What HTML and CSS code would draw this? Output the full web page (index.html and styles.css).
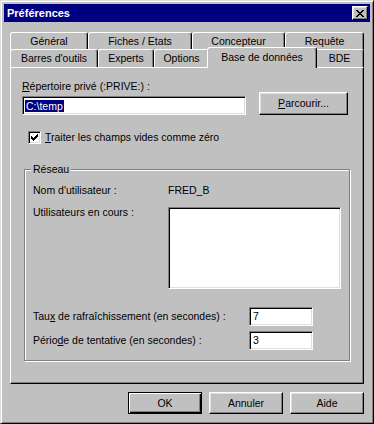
FILE: index.html
```html
<!DOCTYPE html>
<html lang="fr">
<head>
<meta charset="utf-8">
<title>Préférences</title>
<link rel="stylesheet" href="styles.css">
</head>
<body>
<div class="window">
  <div class="titlebar">
    <span class="title">Préférences</span>
    <span class="close">
      <svg width="8" height="7" viewBox="0 0 8 7" shape-rendering="crispEdges">
        <path fill="#000" d="M0 0h2v1H0zM6 0h2v1H6zM1 1h2v1H1zM5 1h2v1H5zM2 2h4v1H2zM3 3h2v1H3zM2 4h4v1H2zM1 5h2v1H1zM5 5h2v1H5zM0 6h2v1H0zM6 6h2v1H6z"/>
      </svg>
    </span>
  </div>
  <div class="content">
    <div class="tabs">
      <div class="tabrow row1">
        <div class="tab t-gen">Général</div>
        <div class="tab t-fic">Fiches / Etats</div>
        <div class="tab t-con">Concepteur</div>
        <div class="tab t-req">Requête</div>
      </div>
      <div class="tabrow row2">
        <div class="tab t-bar">Barres d'outils</div>
        <div class="tab t-exp">Experts</div>
        <div class="tab t-opt">Options</div>
        <div class="tab t-base sel">Base de données</div>
        <div class="tab t-bde">BDE</div>
      </div>
    </div>
    <div class="panel">
      <div class="label-top"><u>R</u>épertoire privé (:PRIVE:) :</div>
      <div class="fieldrow">
        <div class="field path"><span class="selected">C:\temp</span></div>
        <div class="btn browse"><u>P</u>arcourir...</div>
      </div>
      <div class="checkrow">
        <span class="checkbox">
          <svg width="7" height="7" viewBox="0 0 7 7" shape-rendering="crispEdges">
            <path fill="#000" d="M6 0h1v1H6zM5 1h2v1H5zM0 2h1v1H0zM4 2h3v1H4zM0 3h2v1H0zM3 3h3v1H3zM0 4h5v1H0zM1 5h3v1H1zM2 6h1v1H2z"/>
          </svg>
        </span>
        <span class="checklabel"><u>T</u>raiter les champs vides comme zéro</span>
      </div>
      <div class="group">
        <div class="legend">Réseau</div>
        <div class="grow name-row">
          <span class="glabel">Nom d'utilisateur :</span>
          <span class="gvalue">FRED_B</span>
        </div>
        <div class="grow users-row">
          <span class="glabel users-label">Utilisateurs en cours :</span>
          <div class="field listbox"></div>
        </div>
        <div class="grow num-row first">
          <span class="glabel wide">Tau<u>x</u> de rafraîchissement (en secondes) :</span>
          <div class="field num">7</div>
        </div>
        <div class="grow num-row second">
          <span class="glabel wide">Pério<u>d</u>e de tentative (en secondes) :</span>
          <div class="field num">3</div>
        </div>
      </div>
    </div>
    <div class="buttons">
      <div class="btn dlg default">OK</div>
      <div class="btn dlg">Annuler</div>
      <div class="btn dlg">Aide</div>
    </div>
  </div>
</div>
</body>
</html>
```
FILE: styles.css
```css
* { box-sizing: border-box; }
html, body { margin: 0; padding: 0; background: #c0c0c0; }
body {
  font-family: "Liberation Sans", Arial, sans-serif;
  font-size: 10.5px;
  line-height: 13px;
  color: #000;
}
u { text-decoration: underline; text-underline-offset: 1px; }

.window {
  width: 374px;
  height: 424px;
  border: 1px solid;
  border-color: #dfdfdf #000 #000 #dfdfdf;
  box-shadow: inset 1px 1px #fff, inset -1px -1px #808080;
  padding: 3px;
  background: #c0c0c0;
  display: flex;
  flex-direction: column;
}

.titlebar {
  height: 18px;
  background: #000080;
  display: flex;
  align-items: center;
  justify-content: space-between;
  padding: 0 2px 0 3px;
}
.title { color: #fff; font-weight: bold; font-size: 11px; }
.close {
  width: 16px;
  height: 14px;
  background: #c0c0c0;
  border: 1px solid;
  border-color: #fff #000 #000 #fff;
  box-shadow: inset -1px -1px #808080, inset 1px 1px #dfdfdf;
  display: flex;
  align-items: center;
  justify-content: center;
}
.close svg { display: block; }

.content { padding: 10px 6px 0; }

.tabrow { display: flex; align-items: flex-start; }
.row1 { height: 17px; }
.row2 { height: 18px; }
.tab {
  height: 18px;
  display: flex;
  align-items: center;
  justify-content: center;
  background: #c0c0c0;
  border-top: 1px solid #fff;
  border-left: 1px solid #fff;
  border-right: 1px solid #000;
  border-radius: 3px 3px 0 0;
  box-shadow: inset -1px 0 #808080;
  white-space: nowrap;
}
.t-gen { width: 78px; }
.t-fic { width: 104px; }
.t-con { width: 93px; }
.t-req { width: 79px; }
.t-bar { width: 88px; }
.t-exp { width: 56px; }
.t-opt { width: 55px; }
.t-base { width: 106px; }
.t-bde { width: 49px; }
.tab.sel {
  width: 110px;
  height: 21px;
  margin: -2px -2px 0;
  position: relative;
  z-index: 1;
  padding-bottom: 2px;
}

.panel {
  height: 317px;
  border: 1px solid;
  border-color: #fff #000 #000 #fff;
  box-shadow: inset -1px -1px #808080;
  padding: 12px 11px 0;
}

.label-top { height: 12px; line-height: 12px; }

.field {
  background: #fff;
  border: 1px solid;
  border-color: #808080 #fff #fff #808080;
  box-shadow: inset 1px 1px #000, inset -1px -1px #dfdfdf;
}

.fieldrow { display: flex; align-items: flex-start; height: 23px; }
.path {
  width: 224px;
  height: 19px;
  margin-top: 4px;
  padding: 2px 0 0 2px;
  display: flex;
  align-items: flex-start;
}
.selected {
  background: #000080;
  color: #fff;
  line-height: 12px;
  padding: 0 1px;
  margin-top: 1px;
}

.btn {
  background: #c0c0c0;
  border: 1px solid;
  border-color: #fff #000 #000 #fff;
  box-shadow: inset -1px -1px #808080, inset 1px 1px #dfdfdf;
  display: flex;
  align-items: center;
  justify-content: center;
}
.browse { width: 89px; height: 23px; margin-left: 13px; }

.checkrow { display: flex; align-items: center; margin-top: 16px; height: 13px; }
.checkbox {
  width: 13px;
  height: 13px;
  margin-left: 6px;
  background: #fff;
  border: 1px solid;
  border-color: #808080 #fff #fff #808080;
  box-shadow: inset 1px 1px #000, inset -1px -1px #dfdfdf;
  display: flex;
  align-items: center;
  justify-content: center;
}
.checkbox svg { display: block; }
.checklabel { margin-left: 4px; }

.group {
  margin: 25px 0 0 2px;
  width: 326px;
  height: 192px;
  border: 1px solid #808080;
  box-shadow: inset 1px 1px #fff, 1px 1px #fff;
  padding: 0 8px;
}
.legend {
  display: table;
  margin: -7px 0 0 -2px;
  padding: 0 2px;
  background: #c0c0c0;
}
.grow { display: flex; }
.glabel { width: 135px; flex: none; }
.glabel.wide { width: 216px; }
.name-row { margin-top: 8px; }
.users-row { margin-top: 10px; align-items: flex-start; }
.users-label { margin-top: -1px; }
.listbox { width: 176px; height: 82px; }
.num-row { align-items: center; }
.num-row.first { margin-top: 18px; }
.num-row.second { margin-top: 5px; }
.num {
  width: 64px;
  height: 19px;
  padding: 2px 0 0 3px;
  line-height: 13px;
}

.buttons {
  display: flex;
  justify-content: flex-end;
  gap: 7px;
  margin-top: 8px;
}
.dlg { width: 74px; height: 22px; }
.btn.default {
  border-color: #000;
  box-shadow: inset 1px 1px #fff, inset -1px -1px #000, inset -2px -2px #808080;
}
```
